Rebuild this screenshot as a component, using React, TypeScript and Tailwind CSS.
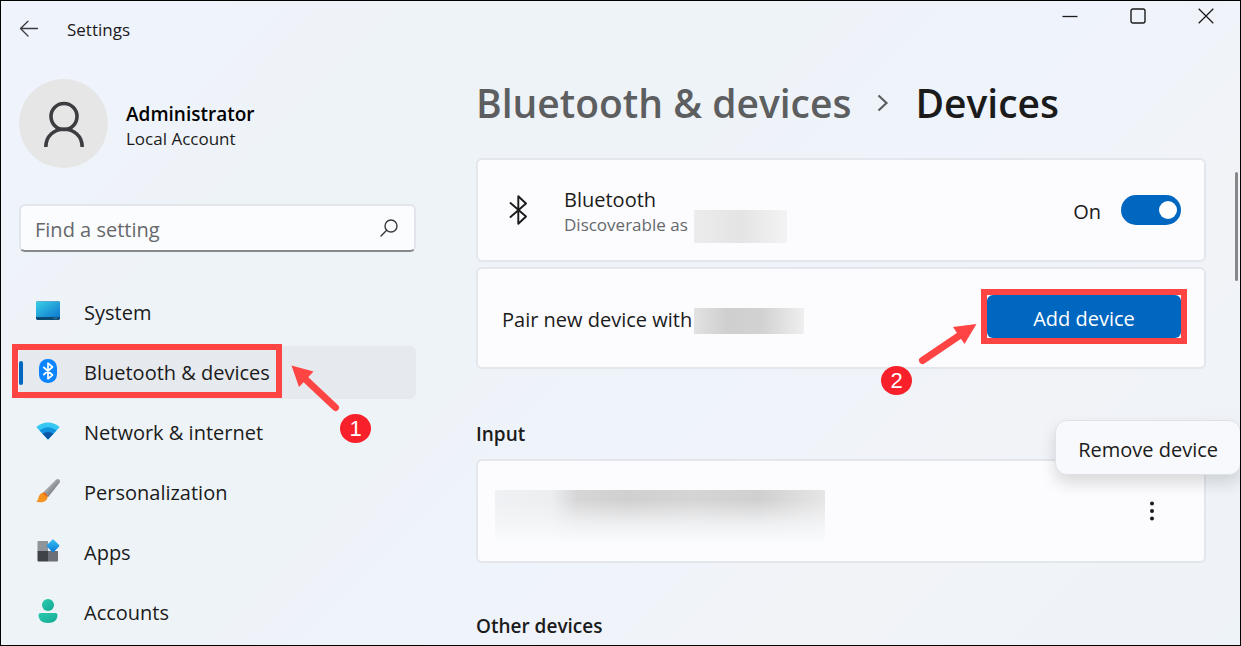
import { useState } from "react";
import type { ReactNode } from "react";

function BluetoothGlyph({ className }: { className?: string }) {
  return (
    <svg viewBox="0 0 18 30" className={className} fill="none" stroke="currentColor" strokeWidth="1.900" strokeLinejoin="round" strokeLinecap="round" aria-hidden="true">
      <path d="M1.500 8 L17 21.500 L9.300 28.800 V1.200 L17 8.500 L1.500 22" />
    </svg>
  );
}

function SystemIcon() {
  return (
    <svg viewBox="0 0 24 24" className="size-6" aria-hidden="true">
      <defs>
        <linearGradient id="sys" x1="0" y1="0" x2="1" y2="1">
          <stop offset="0" stopColor="#38d0e6" />
          <stop offset="1" stopColor="#0f78cf" />
        </linearGradient>
      </defs>
      <rect x="0" y="2.5" width="24" height="18.5" rx="1.4" fill="#0b4a73" />
      <path d="M0 3.9a1.4 1.4 0 0 1 1.4-1.4h21.2a1.4 1.4 0 0 1 1.4 1.4V18H0z" fill="url(#sys)" />
      <rect x="17.5" y="18.6" width="4" height="1.6" fill="#2f6d92" />
    </svg>
  );
}

function BluetoothIcon() {
  return (
    <svg viewBox="0 0 24 24" className="size-6" aria-hidden="true">
      <rect x="3" y="0" width="18" height="24" rx="8.5" fill="#0a84ff" />
      <path d="M7.3 8 L16.5 16 L12 19.8 V4.2 L16.5 8 L7.3 16" fill="none" stroke="#fff" strokeWidth="1.7" strokeLinejoin="round" />
    </svg>
  );
}

function NetworkIcon() {
  return (
    <svg viewBox="0 0 24 24" className="size-6" aria-hidden="true">
      <path d="M.4 8.2C6.8 2 17.2 2 23.6 8.2L12 20.5z" fill="#35c8f3" />
      <path d="M3.5 11.500C8.200 7 15.800 7 20.500 11.500L12 20.500z" fill="#1392dc" />
      <path d="M6.800 15C9.700 12.200 14.300 12.200 17.200 15L12 20.500z" fill="#0b57a4" />
    </svg>
  );
}

function BrushIcon() {
  return (
    <svg viewBox="0 0 24 24" className="size-6" aria-hidden="true">
      <defs>
        <linearGradient id="handle" x1="0" y1="0" x2="1" y2="1">
          <stop offset="0.3" stopColor="#b4b8bc" />
          <stop offset="0.75" stopColor="#6d7175" />
        </linearGradient>
      </defs>
      <path d="M7.3 13.2 19.7 1C22.200-1.200 25 1 23.500 3.700L12.200 18z" fill="url(#handle)" />
      <path d="M0 22.200C2.700 21.600 1.800 18.800 3.700 15.700 5 13.500 8 13 10 14.700 12.300 16.700 12 20 9.300 22 6.500 24 2.500 23.500 0 22.200z" fill="#f6921e" />
      <path d="M6.500 13.800C8 13.300 9 13.800 10 14.700 11.300 15.800 11.700 17.200 11.400 18.600z" fill="#e0641a" />
    </svg>
  );
}

function AppsIcon() {
  return (
    <svg viewBox="0 0 24 24" className="size-6" aria-hidden="true">
      <defs>
        <linearGradient id="tile" x1="0" y1="0" x2="1" y2="1">
          <stop offset="0" stopColor="#3cc0f4" />
          <stop offset="1" stopColor="#0a78d4" />
        </linearGradient>
      </defs>
      <path d="M2.500 2H12v10.500H1.500V3a1 1 0 0 1 1-1z" fill="#8f949b" />
      <path d="M1.500 12H12v10.500H2.500a1 1 0 0 1-1-1z" fill="#3f4247" />
      <path d="M12 12h10v9.500a1 1 0 0 1-1 1h-9z" fill="#6c7076" />
      <rect x="12.200" y="2" width="9.600" height="9.600" rx="1" transform="rotate(45 17 6.800)" fill="url(#tile)" />
    </svg>
  );
}

function AccountsIcon() {
  return (
    <svg viewBox="0 0 24 24" className="size-6" aria-hidden="true">
      <defs>
        <linearGradient id="acct" x1="0" y1="0" x2="1" y2="1">
          <stop offset="0" stopColor="#2acbb0" />
          <stop offset="1" stopColor="#13a892" />
        </linearGradient>
      </defs>
      <circle cx="12" cy="6" r="6" fill="url(#acct)" />
      <path d="M4.500 14h15a2 2 0 0 1 2 2c0 5-3.500 8-9.500 8s-9.500-3-9.500-8a2 2 0 0 1 2-2z" fill="url(#acct)" />
    </svg>
  );
}

function StepBadge({ step, className }: { step: number; className: string }) {
  return (
    <span className={`absolute flex h-[29px] w-[31px] items-center justify-center rounded-[50%] bg-[#f8202a] font-['Liberation_Sans',sans-serif] text-[22px] leading-none text-white ${className}`}>
      {step}
    </span>
  );
}

const items: { label: string; icon: ReactNode }[] = [
  { label: "System", icon: <SystemIcon /> },
  { label: "Bluetooth & devices", icon: <BluetoothIcon /> },
  { label: "Network & internet", icon: <NetworkIcon /> },
  { label: "Personalization", icon: <BrushIcon /> },
  { label: "Apps", icon: <AppsIcon /> },
  { label: "Accounts", icon: <AccountsIcon /> },
];

function TitleBar() {
  return (
    <header className="flex h-14 items-start justify-between">
      <div className="flex h-14 items-center gap-7 pl-[18px]">
        <button type="button" aria-label="Back">
          <svg viewBox="0 0 20 20" className="size-5" fill="none" stroke="#3a3a3c" strokeWidth="1.300" strokeLinecap="round" strokeLinejoin="round">
            <path d="M18.500 9.500H1.500M9 2.200 1.500 9.500 9 17" />
          </svg>
        </button>
        <span className="pt-0.5 text-[17px]">Settings</span>
      </div>
      <div className="flex">
        <button type="button" aria-label="Minimize" className="flex h-[30px] w-[68px] items-center justify-center">
          <svg viewBox="0 0 16 16" className="size-4" stroke="#1b1b1b" strokeWidth="1.300">
            <path d="M.5 8.500h15" />
          </svg>
        </button>
        <button type="button" aria-label="Maximize" className="flex h-[30px] w-[68px] items-center justify-center">
          <svg viewBox="0 0 16 16" className="size-4" fill="none" stroke="#1b1b1b" strokeWidth="1.400">
            <rect x="1" y="1" width="14" height="14" rx="2" />
          </svg>
        </button>
        <button type="button" aria-label="Close" className="flex h-[30px] w-[68px] items-center justify-center">
          <svg viewBox="0 0 16 16" className="size-4" stroke="#1b1b1b" strokeWidth="1.300">
            <path d="M.7.7l14.600 14.600M15.300.7.7 15.300" />
          </svg>
        </button>
      </div>
    </header>
  );
}

function Sidebar() {
  return (
    <aside className="w-[397px] shrink-0 pt-[22px]">
      <div className="flex items-center gap-[18px]">
        <div className="flex size-[89px] items-center justify-center rounded-full bg-[#e6e6e6]">
          <svg viewBox="0 0 42 46" className="h-[46px] w-[42px]" fill="none" stroke="#3b3d40" strokeWidth="3.600" aria-hidden="true">
            <circle cx="21" cy="15.500" r="13" />
            <path d="M2.800 46C2.800 35 11 28.300 21 28.300S39.200 35 39.200 46" />
          </svg>
        </div>
        <div className="pt-1">
          <p className="text-[19px] leading-[26px] font-semibold text-black">Administrator</p>
          <p className="text-[17px] leading-6">Local Account</p>
        </div>
      </div>

      <div className="mt-9 flex h-12 items-center rounded-md border-2 border-[#e2e6ec] border-b-[#86888b] bg-[#fbfcfe] pr-4 pl-[14px]">
        <input
          type="search"
          aria-label="Find a setting"
          placeholder="Find a setting"
          className="min-w-0 flex-1 bg-transparent pt-1 text-[20px] outline-none placeholder:text-[#66686b]"
        />
        <svg viewBox="0 0 18 18" className="size-[18px]" fill="none" stroke="#3a3a3c" strokeWidth="1.400" strokeLinecap="round" aria-hidden="true">
          <circle cx="11" cy="7" r="6" />
          <path d="M6.700 11.300 1 17" />
        </svg>
      </div>

      <nav className="mt-[34px]">
        <ul className="flex flex-col gap-[7px]">
          {items.map(({ label, icon }) => {
            const active = label === "Bluetooth & devices";
            return (
              <li key={label} className="relative">
                <a
                  href="#"
                  aria-current={active ? "page" : undefined}
                  className={`flex h-[53px] items-center rounded-md text-[20px] ${active ? "bg-[#e6e9ee]" : ""}`}
                >
                  <span className={`h-6 w-1 rounded-full ${active ? "bg-[#0067c0]" : ""}`} />
                  <span className="ml-[13px] flex w-12 shrink-0 pb-1">{icon}</span>
                  {label}
                </a>
                {active && (
                  <>
                    <span className="pointer-events-none absolute -top-0.5 -left-[7px] h-[54px] w-[270px] border-[6px] border-[#ff4444]" />
                    <svg viewBox="0 0 50 48" className="pointer-events-none absolute top-[18px] left-[271px] h-12 w-[50px]" aria-hidden="true">
                      <path d="M12 12 45.500 43.500" stroke="#ff4444" strokeWidth="7" strokeLinecap="round" />
                      <path d="M1.500 1.500 23.500 7.500 9 23z" fill="#ff4444" />
                    </svg>
                    <StepBadge step={1} className="top-[68px] left-[321px]" />
                  </>
                )}
              </li>
            );
          })}
        </ul>
      </nav>
    </aside>
  );
}

const card = "flex items-center rounded-md border-2 border-[#e3e6eb] bg-[#fcfcfe]";

export default function App() {
  const [on, setOn] = useState(true);
  return (
    <div className="flex min-h-screen flex-col overflow-hidden border border-black bg-[linear-gradient(135deg,#eff3fb_10%,#eef3f7_24%,#eef3f8_42%,#eff3fb_58%,#f1f3f7_75%,#eef3f8_100%)] font-['Open_Sans','Noto_Sans',sans-serif] text-[#1b1b1b]">
      <TitleBar />
      <div className="flex flex-1 pl-[18px]">
        <Sidebar />

        <main className="ml-[60px] min-w-0 flex-1 pt-[22px]">
          <h1 className="flex items-center text-[39px] leading-[48px] font-semibold whitespace-nowrap">
            <a href="#" className="text-[#5d5e60]">Bluetooth &amp; devices</a>
            <svg viewBox="0 0 12 18" className="mx-[26px] h-[18px] w-3 shrink-0" fill="none" stroke="#5d5e60" strokeWidth="2.200" aria-hidden="true">
              <path d="M1.500 1.500 9.500 9l-8 7.500" />
            </svg>
            <span>Devices</span>
          </h1>

          <section className={`${card} mt-[31px] h-[104px] pr-[23px] pl-[31px]`}>
            <BluetoothGlyph className="h-[30px] w-[18px]" />
            <div className="ml-[37px] pt-1.5">
              <p id="bt-label" className="text-[20px] leading-6">Bluetooth</p>
              <div className="flex h-[27px] items-start gap-1.5">
                <p className="text-[17px] leading-[26px] text-[#66686b]">Discoverable as</p>
                <span className="-mt-0.5 h-[33px] w-[93px] bg-linear-to-r from-[#ececec] via-[#e4e4e4] to-[#f3f3f3]" />
              </div>
            </div>
            <label htmlFor="bt" className="ml-auto pt-1 text-[20px]">{on ? "On" : "Off"}</label>
            <input
              id="bt"
              type="checkbox"
              role="switch"
              aria-describedby="bt-label"
              checked={on}
              onChange={(e) => setOn(e.target.checked)}
              className="ml-5 flex h-[30px] w-[60px] appearance-none items-center rounded-full bg-[#8a8a8a] px-1 before:size-[18px] before:rounded-full before:bg-white checked:justify-end checked:bg-[#0067c0]"
            />
          </section>

          <section className={`${card} mt-[5px] h-[102px] pr-[23px] pl-6`}>
            <p className="pt-1 text-[20px]">Pair new device with</p>
            <span className="mt-1.5 ml-0.5 h-[26px] w-[110px] bg-[linear-gradient(to_right,#e2e2e2,#cfcfd0_30%,#d2d2d3_62%,#efefef)]" />
            <div className="relative mb-[3px] ml-auto">
              <button type="button" className="block h-[43px] w-[194px] rounded-md bg-[#0067c0] pt-1 text-[20px] text-white">
                Add device
              </button>
              <span className="pointer-events-none absolute -inset-1.5 border-[6px] border-[#ff4444]" />
              <svg viewBox="0 0 60 44" className="pointer-events-none absolute top-7 -left-[70px] h-11 w-[60px]" aria-hidden="true">
                <path d="M5.500 37.500 44 11.500" stroke="#ff4444" strokeWidth="7" strokeLinecap="round" />
                <path d="M59.500 1 47.500 21 36 4z" fill="#ff4444" />
              </svg>
              <StepBadge step={2} className="top-[71px] -left-[106px]" />
            </div>
          </section>

          <h2 className="mt-[51px] text-[19px] leading-7 font-semibold">Input</h2>
          <section className={`${card} relative mt-[11px] h-[104px] pr-10 pl-[17px]`}>
            <div className="mt-2 h-[51px] w-[330px] bg-[linear-gradient(to_right,#eff1f4,#eceef0_17%,#d6d6d7_25%,#d0d0d1_40%,#d5d5d6_60%,#d0d0d1_80%,#e6e6e7)]">
              <div className="h-full bg-[linear-gradient(to_bottom,transparent_20%,#f5f6f7cc_65%,#fafbfc)]" />
            </div>
            <button type="button" aria-label="More options" className="ml-auto flex w-6 justify-center">
              <svg viewBox="0 0 6 20" className="h-5 w-[6px]" fill="#1b1b1b">
                <circle cx="3" cy="2.500" r="2" />
                <circle cx="3" cy="10" r="2" />
                <circle cx="3" cy="17.500" r="2" />
              </svg>
            </button>
            <div role="menu" className="absolute -top-[41px] -right-[37px] rounded-xl border border-[#dfe2e8] bg-[#f8f9fc] shadow-[0_8px_16px_rgba(0,0,0,0.14)]">
              <button type="button" role="menuitem" className="block h-[53px] px-[22px] pt-1 text-[20px] whitespace-nowrap">
                Remove device
              </button>
            </div>
          </section>

          <h2 className="mt-[49px] text-[19px] leading-7 font-semibold">Other devices</h2>
        </main>

        <div className="flex w-[34px] shrink-0 justify-end pt-[115px] pr-0.5">
          <div className="h-[109px] w-[3px] rounded-full bg-[#858789]" />
        </div>
      </div>
    </div>
  );
}
